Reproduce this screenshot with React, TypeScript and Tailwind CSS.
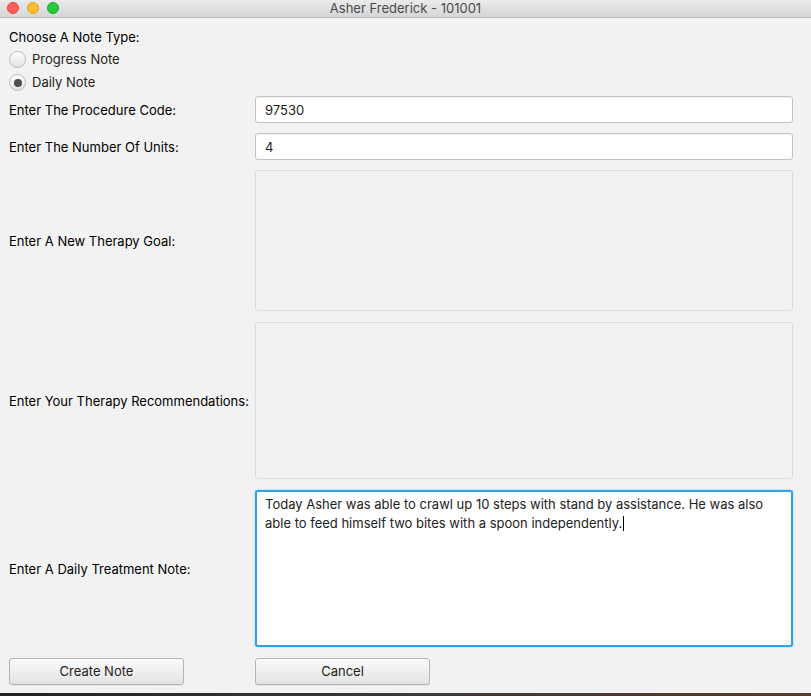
import { useState } from 'react'

const font = { fontFamily: 'Inter, "Liberation Sans", Arial, sans-serif' }

const Radio = ({ label, checked }: { label: string; checked?: boolean }) => (
  <div className="flex h-[23px] items-center">
    <span className="flex h-[17px] w-[17px] items-center justify-center rounded-full border border-[#b9b9b9] bg-gradient-to-b from-[#fdfdfd] to-[#e4e4e4] shadow-[inset_0_1px_0_#fff]">
      {checked && <span className="h-[8px] w-[8px] rounded-full bg-[#4d4d4d]" />}
    </span>
    <span className="ml-[6px] pt-[1px] text-[13px] text-[#222]">{label}</span>
  </div>
)

const Row = ({ label, h, children }: { label: string; h: string; children: React.ReactNode }) => (
  <div className={`flex items-center ${h}`}>
    <div className="w-[246px] shrink-0 pt-[2px] text-[13px] text-black">{label}</div>
    <div className="flex h-full flex-1">{children}</div>
  </div>
)

const Field = ({ value }: { value: string }) => (
  <div className="flex h-full w-full items-center rounded-[3px] border border-[#c2c2c2] bg-white px-[9px] pt-[2px] text-[13px] text-[#222] shadow-[inset_0_1px_1px_rgba(0,0,0,0.06)]">
    {value}
  </div>
)

const EmptyArea = () => (
  <div className="h-full w-full rounded-[3px] border border-[#dcdcdc] bg-[#f2f2f2]" />
)

const Button = ({ label }: { label: string }) => (
  <button className="h-[27px] w-[175px] rounded-[3px] border border-[#b4b4b4] bg-gradient-to-b from-[#fbfbfb] to-[#e3e3e3] text-[13px] text-[#222] shadow-[0_1px_0_rgba(0,0,0,0.05)]">
    {label}
  </button>
)

export default function App() {
  const [note] = useState(
    'Today Asher was able to crawl up 10 steps with stand by assistance. He was also able to feed himself two bites with a spoon independently.'
  )

  return (
    <div className="flex h-[696px] w-[811px] flex-col overflow-hidden bg-[#f2f2f2]" style={font}>
      {/* title bar */}
      <div className="relative flex h-[18px] shrink-0 items-center justify-center border-b border-[#b9b9b9] bg-gradient-to-b from-[#ebebeb] to-[#d6d6d6]">
        <div className="absolute left-[7px] top-[2px] flex gap-[8px]">
          <span className="h-[12px] w-[12px] rounded-full border border-[#e0443e] bg-[#fe5f57]" />
          <span className="h-[12px] w-[12px] rounded-full border border-[#dea123] bg-[#febc2e]" />
          <span className="h-[12px] w-[12px] rounded-full border border-[#1aab29] bg-[#28c840]" />
        </div>
        <span className="text-[13px] text-[#4a4a4a]">Asher Frederick - 101001</span>
      </div>

      <div className="flex flex-1 flex-col pl-[9px] pr-[18px]">
        <div className="mt-[10px] h-[17px] text-[13px] text-black">Choose A Note Type:</div>
        <div className="mt-[3px]">
          <Radio label="Progress Note" />
          <Radio label="Daily Note" checked />
        </div>

        <div className="mt-[2px] flex flex-col gap-[10px]">
          <Row label="Enter The Procedure Code:" h="h-[27px]">
            <Field value="97530" />
          </Row>
          <Row label="Enter The Number Of Units:" h="h-[27px]">
            <Field value="4" />
          </Row>
          <Row label="Enter A New Therapy Goal:" h="h-[141px]">
            <EmptyArea />
          </Row>
        </div>

        <div className="mt-[11px] flex flex-col gap-[11px]">
          <Row label="Enter Your Therapy Recommendations:" h="h-[157px]">
            <EmptyArea />
          </Row>
          <Row label="Enter A Daily Treatment Note:" h="h-[157px]">
            <div className="h-full w-full rounded-[3px] border-2 border-[#2ea3e3] bg-white px-[8px] py-[3px] text-[13px] leading-[18px] text-[#222] shadow-[0_0_2px_#7cc6f0]">
              {note}
              <span className="ml-[1px] inline-block h-[15px] w-px translate-y-[3px] bg-black" />
            </div>
          </Row>
          <div className="flex h-[27px]">
            <div className="w-[246px] shrink-0">
              <Button label="Create Note" />
            </div>
            <Button label="Cancel" />
          </div>
        </div>
      </div>

      <div className="h-[3px] shrink-0 bg-gradient-to-r from-[#222] via-[#3a3a3a] to-[#5a3a28]" />
    </div>
  )
}
